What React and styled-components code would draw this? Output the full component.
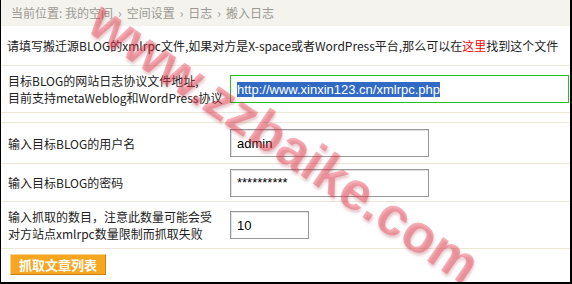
import React from 'react';
import styled, { createGlobalStyle } from 'styled-components';

const GlobalStyle = createGlobalStyle`
    html, body {
        margin: 0;
        padding: 0;
        background: #fff;
    }
    body {
        font-family: "Noto Sans CJK SC", "DejaVu Sans", sans-serif;
        font-size: 12px;
        color: #222;
    }
`;

const Frame = styled.div`
    position: relative;
    width: 572px;
    height: 284px;
    box-sizing: border-box;
    border-left: 1px solid #000;
    border-right: 2px solid #000;
    border-bottom: 2px solid #000;
    overflow: hidden;
    background: #fff;
`;

const Crumbs = styled.div`
    height: 26px;
    line-height: 26px;
    padding-left: 10px;
    background: #f5f3ee;
    color: #9a9a92;
    font-size: 12px;
`;

const Sep = styled.span`
    margin: 0 5px;
`;

const Intro = styled.div`
    height: 39px;
    line-height: 40px;
    padding-left: 6px;
    border-bottom: 1px solid #ece6d6;
    white-space: nowrap;
`;

const Here = styled.span`
    color: #f00;
`;

const Row = styled.div`
    display: grid;
    grid-template-columns: 229px 1fr;
    align-items: center;
    height: ${(p) => p.$h}px;
    border-bottom: 1px solid #ece6d6;
    box-sizing: border-box;
`;

const Spacer = styled.div`
    height: 9px;
    border-bottom: 1px solid #ece6d6;
`;

const Label = styled.div`
    padding-left: 7px;
    line-height: 17px;
    white-space: nowrap;
`;

const Field = styled.input`
    box-sizing: border-box;
    width: ${(p) => p.$w}px;
    height: 28px;
    padding: 0 6px;
    border: 1px solid #999;
    box-shadow: inset 1px 1px 0 #e2e2e2;
    font-family: "Liberation Sans", Arial, sans-serif;
    font-size: 13px;
    color: #000;
    background: #fff;
    outline: none;
`;

const UrlBox = styled.div`
    box-sizing: border-box;
    width: 339px;
    height: 28px;
    padding: 0 6px;
    display: flex;
    align-items: center;
    border: 1px solid #22c022;
    font-family: "Liberation Sans", Arial, sans-serif;
    font-size: 13px;
`;

const Selected = styled.span`
    background: #316ac5;
    color: #fff;
    line-height: 15px;
`;

const Actions = styled.div`
    padding: 5px 0 0 9px;
`;

const Button = styled.button`
    width: 96px;
    height: 21px;
    padding: 0;
    background: #f6a61f;
    border: 1px solid;
    border-color: #fcd58c #c8810e #c8810e #fcd58c;
    color: #fff;
    font-family: "Noto Sans CJK SC", sans-serif;
    font-size: 13px;
    font-weight: bold;
    line-height: 19px;
    cursor: pointer;
`;

const Watermark = styled.div`
    position: absolute;
    left: 284px;
    top: 142px;
    transform: translate(-50%, -50%) rotate(34deg);
    white-space: nowrap;
    font-family: "Liberation Sans", Arial, sans-serif;
    font-weight: bold;
    font-size: 54px;
    color: rgba(238, 60, 80, 0.4);
    text-shadow: 2px 2px 3px rgba(140, 0, 20, 0.22);
    pointer-events: none;
`;

const crumbs = ['我的空间', '空间设置', '日志', '搬入日志'];

const App = () => {
    return (
        <>
            <GlobalStyle />
            <Frame>
                <Crumbs>
                    当前位置: {crumbs[0]}
                    {crumbs.slice(1).map((c) => (
                        <React.Fragment key={c}>
                            <Sep>›</Sep>
                            {c}
                        </React.Fragment>
                    ))}
                </Crumbs>
                <Intro>
                    请填写搬迁源BLOG的xmlrpc文件,如果对方是X-space或者WordPress平台,那么可以在
                    <Here>这里</Here>找到这个文件
                </Intro>
                <Row $h={47}>
                    <Label>
                        目标BLOG的网站日志协议文件地址,
                        <br />
                        目前支持metaWeblog和WordPress协议
                    </Label>
                    <UrlBox>
                        <Selected>http://www.xinxin123.cn/xmlrpc.php</Selected>
                    </UrlBox>
                </Row>
                <Spacer />
                <Row $h={41}>
                    <Label>输入目标BLOG的用户名</Label>
                    <Field $w={199} defaultValue="admin" />
                </Row>
                <Row $h={38}>
                    <Label>输入目标BLOG的密码</Label>
                    <Field $w={199} defaultValue="**********" />
                </Row>
                <Row $h={47}>
                    <Label>
                        输入抓取的数目，注意此数量可能会受
                        <br />
                        对方站点xmlrpc数量限制而抓取失败
                    </Label>
                    <Field $w={79} defaultValue="10" />
                </Row>
                <Actions>
                    <Button type="button">抓取文章列表</Button>
                </Actions>
                <Watermark>www.zzbaike.com</Watermark>
            </Frame>
        </>
    );
};

export default App;
